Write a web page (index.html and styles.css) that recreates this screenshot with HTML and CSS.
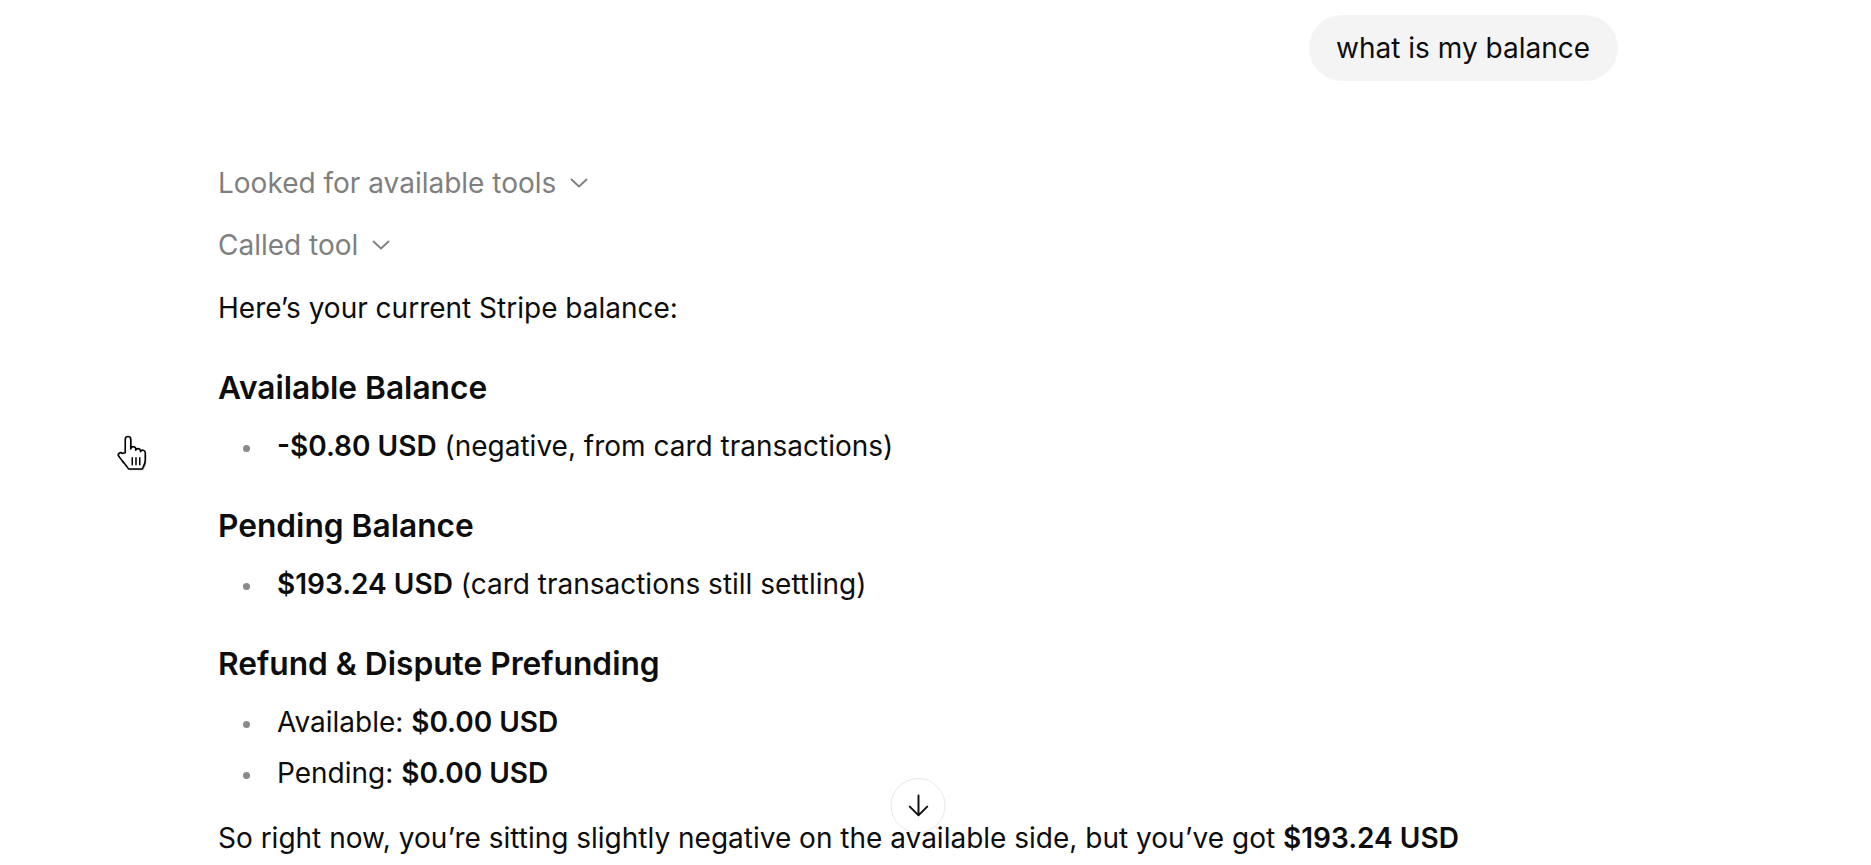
FILE: index.html
```html
<!DOCTYPE html>
<html lang="en">
<head>
    <meta charset="UTF-8">
    <meta name="viewport" content="width=device-width, initial-scale=1.0">
    <title>Stripe balance chat</title>
    <link rel="stylesheet" href="styles.css">
</head>
<body>
    <main class="main">
        <div class="thread">
            <div class="user-row">
                <div class="user-bubble">what is my balance</div>
            </div>

            <div class="assistant">
                <div class="tool-steps">
                    <button class="tool-step" type="button">
                        Looked for available tools
                        <svg class="chevron" viewBox="0 0 18 12" width="18" height="12"><path d="M1.5 2.5L9 9.5l7.5-7" /></svg>
                    </button>
                    <button class="tool-step" type="button">
                        Called tool
                        <svg class="chevron" viewBox="0 0 18 12" width="18" height="12"><path d="M1.5 2.5L9 9.5l7.5-7" /></svg>
                    </button>
                </div>

                <div class="prose">
                    <p>Here’s your current Stripe balance:</p>

                    <h3>Available Balance</h3>
                    <ul>
                        <li><strong>-$0.80 USD</strong> (negative, from card transactions)</li>
                    </ul>

                    <h3>Pending Balance</h3>
                    <ul>
                        <li><strong>$193.24 USD</strong> (card transactions still settling)</li>
                    </ul>

                    <h3>Refund &amp; Dispute Prefunding</h3>
                    <ul>
                        <li>Available: <strong>$0.00 USD</strong></li>
                        <li>Pending: <strong>$0.00 USD</strong></li>
                    </ul>

                    <p>So right now, you’re sitting slightly negative on the available side, but you’ve got <strong>$193.24 USD</strong></p>
                </div>
            </div>

            <button class="scroll-down" type="button" aria-label="Scroll to bottom">
                <svg viewBox="0 0 24 24" width="28" height="28"><path d="M12 3v17M4.5 12.5L12 20l7.5-7.5" /></svg>
            </button>
        </div>
    </main>

    <!-- pointer captured in the recording -->
    <svg class="cursor" viewBox="0 0 32 32" width="40" height="40">
        <path class="cursor-shadow" d="M10 16V5.2a2.2 2.2 0 0 1 4.4 0V13a2 2 0 0 1 4 .3v.6a2 2 0 0 1 3.8.4v.8a2 2 0 0 1 3.8.6V22c0 3-1.4 5-2.4 7H12.6c-1-2-3-4-5-6.5L5 19a1.8 1.8 0 0 1 2.6-2.5z" />
        <path class="cursor-hand" d="M9 15V4.2a2.2 2.2 0 0 1 4.4 0V12a2 2 0 0 1 4 .3v.6a2 2 0 0 1 3.8.4v.8a2 2 0 0 1 3.8.6V21c0 3-1.4 5-2.4 7H11.6c-1-2-3-4-5-6.5L4 18a1.8 1.8 0 0 1 2.6-2.5z" />
        <path class="cursor-lines" d="M14.6 19v5.5M17.6 19v5.5M20.6 19v5.5" />
    </svg>
</body>
</html>
```

FILE: styles.css
```css
body {
    margin: 0;
    background: #ffffff;
    color: #0d0d0d;
    font-family: 'Inter', 'Noto Sans', sans-serif;
    font-size: 28px;
    overflow: hidden;
}

.main {
    padding-right: 35px;
}

.thread {
    position: relative;
    width: 1400px;
    margin: 0 auto;
}

.user-row {
    display: flex;
    justify-content: flex-end;
    padding-top: 15px;
}

.user-bubble {
    background-color: #f4f4f4;
    border-radius: 34px;
    padding: 14px 28px 14px 27px;
    line-height: 38px;
}

.tool-steps {
    display: flex;
    flex-direction: column;
    align-items: flex-start;
    gap: 22px;
    margin-top: 82px;
}

.tool-step {
    display: flex;
    align-items: center;
    gap: 14px;
    padding: 0;
    border: none;
    background: none;
    font: inherit;
    line-height: 40px;
    color: #7f7f7f;
}

.chevron {
    fill: none;
    stroke: #7f7f7f;
    stroke-width: 1.8;
    stroke-linecap: round;
    stroke-linejoin: round;
}

.prose {
    max-width: 1270px;
    line-height: 40px;
}

.prose p {
    margin: 23px 0 0;
}

.prose h3 {
    margin: 38px 0 0;
    font-size: 31.7px;
    font-weight: 600;
    line-height: 44px;
}

.prose ul {
    margin: 16px 0 25px;
    padding-left: 59px;
    list-style: none;
}

.prose li + li {
    margin-top: 11px;
}

.prose li::before {
    content: "";
    display: inline-block;
    width: 7px;
    height: 7px;
    margin-left: -34px;
    margin-right: 27px;
    border-radius: 50%;
    background-color: #8a8a8a;
    vertical-align: middle;
}

.prose strong {
    font-weight: 600;
}

.scroll-down {
    position: absolute;
    top: 778px;
    left: 50%;
    transform: translateX(-50%);
    z-index: -1;
    width: 55px;
    height: 55px;
    display: flex;
    align-items: center;
    justify-content: center;
    padding: 0;
    border: 1px solid #e8e8e8;
    border-radius: 50%;
    background: #ffffff;
}

.scroll-down path {
    fill: none;
    stroke: #111111;
    stroke-width: 1.7;
    stroke-linecap: round;
    stroke-linejoin: round;
}

.cursor {
    position: absolute;
    left: 114px;
    top: 434px;
}

.cursor-shadow {
    fill: rgba(0, 0, 0, 0.25);
}

.cursor-hand {
    fill: #ffffff;
    stroke: #000000;
    stroke-width: 1.3;
    stroke-linejoin: round;
}

.cursor-lines {
    stroke: #000000;
    stroke-width: 1.2;
    stroke-linecap: round;
}
```
